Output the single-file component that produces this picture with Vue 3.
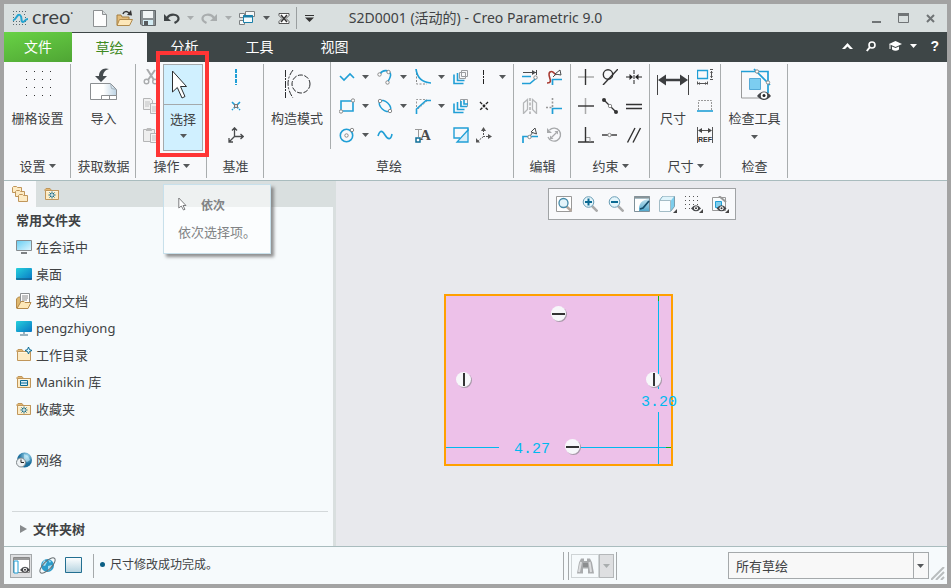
<script setup>
import { h, ref } from 'vue'

const B = '#209fd6'
const K = '#4a4c4e'
const folder = '<path d="M1 5V3.500l1-1h4l1.500 2H15" fill="#e3b873" stroke="#c0965a"/><path d="M1.500 4.500h13v9h-13z" fill="#fdebc4" stroke="#c0965a"/><path d="M2.500 5.500h11" stroke="#fff7e2"/>'
const node = (x, y) => `<circle cx="${x}" cy="${y}" r="1.700" fill="#fff" stroke="#8a8a8a"/>`
const eye = (x, y) => `<g transform="translate(${x} ${y})"><path d="M0 3.500Q5 -3 10 3.500Q5 9 0 3.500z" fill="#45474a"/><circle cx="5" cy="3.300" r="2" fill="#fff"/><circle cx="5" cy="3.300" r="1" fill="#333"/></g>`

const icons = {
  wave: [16, 14, `<g stroke="#59696f" stroke-dasharray="1 2"><path d="M1 .5h15M1 3.500h3M12 3.500h3M1 6.500h3M13 6.500h3M1 10.500h15M1 13.500h15"/></g><path d="M1 9c3 1 4-7 7-5s0 7 3 7c2 0 2-3 5-3" fill="none" stroke="#25a3cf" stroke-width="2"/>`],
  file: [14, 17, '<path d="M.5 .5h9l4 4v12h-13z" fill="#fdfdfd" stroke="#8d9092"/><path d="M9.500 .5v4h4" fill="#d8dcde" stroke="#8d9092"/>'],
  open: [17, 17, '<path d="M1 15V5h4l1 2h7v8z" fill="#e3bc7a" stroke="#a37d3f"/><path d="M3.500 9.500h13l-3 6H1z" fill="#fde7b9" stroke="#b08a4c"/><path d="M7 4c1-3 4-3 6-1" fill="none" stroke="#333" stroke-width="1.500"/><path d="M11 5l5 .5L15 0z" fill="#333"/>'],
  save: [16, 16, '<path d="M.5 .5h15v15H2l-1.500-1.500z" fill="#8a9093" stroke="#62676a"/><path d="M3 1h10v7H3z" fill="#f2f5f6"/><path d="M3 10h10v5H3z" fill="#d3ecf4"/><path d="M4 11h4v4H4z" fill="#55595c"/>'],
  undo: [16, 12, '<path d="M0 2v7h7z" fill="#3f4446"/><path d="M3 6c3-5 12-4 11.500 1 0 2-2 3-4 4" fill="none" stroke="#3f4446" stroke-width="2.200"/>'],
  redo: [16, 12, '<path d="M16 2v7H9z" fill="#a9adae"/><path d="M13 6C10 1 1 2 1.500 7c0 2 2 3 4 4" fill="none" stroke="#a9adae" stroke-width="2.200"/>'],
  wins: [16, 14, '<g fill="#f6f7f7" stroke="#7c8082"><path d="M6.500 .5h9v5h-9zM.5 2.500h5v4h-5zM.5 9.500h5v4h-5z"/></g><path d="M4.500 4.500h9v7h-9z" fill="#f4fbfd" stroke="#1a7fa8"/><path d="M4 5.500h10" stroke="#1a7fa8" stroke-width="2"/>'],
  closewin: [12, 11, '<path d="M1 .5h10v2l-3 3 3 3v2H1v-2l3-3-3-3z" fill="#fff" stroke="#555"/><path d="M3 2l6 7M9 2L3 9" stroke="#333" stroke-width="1.500"/>'],
  custom: [9, 7, '<path d="M0 .5h9" stroke="#333"/><path d="M0 2.500h9L4.500 7z" fill="#333"/>'],
  down: [7, 4, '<path d="M0 0h7L3.500 4z" fill="#55585a"/>'],
  downgray: [7, 4, '<path d="M0 0h7L3.500 4z" fill="#a9adae"/>'],
  downwhite: [7, 4, '<path d="M0 0h7L3.500 4z" fill="#fff"/>'],
  min: [9, 10, '<path d="M0 9h9" stroke="#707476" stroke-width="2"/>'],
  max: [11, 10, '<path d="M.5 .5h10v9H.5z" fill="none" stroke="#707476"/><path d="M0 1.500h11" stroke="#707476" stroke-width="3"/>'],
  close: [9, 9, '<path d="M1 1l7 7M8 1L1 8" stroke="#707476" stroke-width="2"/>'],
  caret: [11, 6, '<path d="M0 6l5.500-6L11 6H8L5.500 3.500 3 6z" fill="#fff"/>'],
  search: [10, 11, '<circle cx="6" cy="4" r="3" fill="none" stroke="#fff" stroke-width="1.600"/><path d="M4 6L.8 10" stroke="#fff" stroke-width="2"/>'],
  cap: [13, 10, '<path d="M0 3l6.500-3L13 3 6.500 6z" fill="#fff"/><path d="M3 5.500v3q3.500 2.500 7 0v-3L6.500 7z" fill="#fff"/><path d="M1 3v5" stroke="#fff"/>'],
  dots: [28, 28, '<path d="M2 1.500h25M2 9.500h25M2 17.500h25M2 25.500h25" stroke="#333" stroke-dasharray="1 7"/>'],
  import: [30, 33, '<defs><linearGradient id="gi"><stop offset=".5" stop-color="#fff"/><stop offset="1" stop-color="#bcd3e4"/></linearGradient></defs><path d="M1.500 15.500h20l6 6v10h-26z" fill="url(#gi)" stroke="#8b8e91"/><path d="M21.500 15.500l1 5 5 1" fill="none" stroke="#a7b4bd"/><path d="M12.500 31.500v-4h15v4zM20.500 31v-3.500" fill="#fff" stroke="#8b8e91"/><path d="M20 1C14-1 10 3 10 8H6l6 6 6-6h-4c0-3 2-6 6-7z" fill="#454b4f"/>'],
  cut: [16, 16, '<path d="M4 0l7 11M12 1L5 11" stroke="#a9abad" stroke-width="2"/><circle cx="3.500" cy="12.500" r="2.300" fill="none" stroke="#a9abad" stroke-width="1.400"/><circle cx="12" cy="12.500" r="2.300" fill="none" stroke="#a9abad" stroke-width="1.400"/>'],
  copy: [16, 16, '<g fill="#f1f1f1" stroke="#b4b5b6"><path d="M.5 .5h7l2 2v9h-9z"/><path d="M7.500 5.500h6l2 2v8h-8z"/></g><path d="M2 4h5M2 6h5M2 8h4M9 9h5M9 11h5M9 13h5" stroke="#c1c2c3"/>'],
  paste: [16, 16, '<path d="M.5 2.500h11v12H.5z" fill="#eee" stroke="#b4b5b6"/><path d="M3 3l1-2h4l1 2v1H3z" fill="#bbb"/><path d="M7.500 6.500h8v9h-8z" fill="#f5f5f5" stroke="#b4b5b6"/><path d="M9 9h5M9 11h5M9 13h5" stroke="#c1c2c3"/>'],
  arrow: [16, 30, '<path d="M1.500 1v21l4.800-4.500L11 28l3-1.500-4.500-10h6z" fill="#fff" stroke="#2c2e30"/>'],
  arrowsm: [9, 14, '<path d="M.8 1v10l2.500-2L5.500 13l1.500-.7L5 8.500h3z" fill="#fff" stroke="#707274" stroke-width=".9"/>'],
  cline: [16, 16, `<path d="M8 0v16" stroke="${B}" stroke-width="2" stroke-dasharray="4 1"/>`],
  cpoint: [16, 16, `<path d="M4 4l8 8M12 4l-8 8" stroke="${B}" stroke-width="1.600" stroke-dasharray="4 1"/><rect x="6.500" y="6.500" width="3" height="3" fill="#ddd" stroke="#777"/>`],
  csys: [16, 16, `<g fill="none" stroke="${K}" stroke-width="1.300"><path d="M6.500 1v8.500H15M6.500 9.500L1 15M4 3.500L6.500 .8 9 3.500M12.500 7l2.700 2.500-2.700 2.500M1 11v4h4"/></g>`],
  construct: [28, 30, '<g fill="none" stroke="#2b2d2f"><path d="M2.500 1v28" stroke-dasharray="7 1 2 1"/><path d="M10 1Q0 14 10 29" stroke-dasharray="6 1.500 2 1.500"/><circle cx="18" cy="15" r="9" stroke-dasharray="5 1.500"/></g>'],
  line: [16, 16, `<path d="M1 7l4 4 6-6 4 4" fill="none" stroke="${B}" stroke-width="1.600"/>`],
  arc: [16, 16, `<path d="M3 5C6 0 12 1 13.500 5c.6 3-1 5-3 8" fill="none" stroke="${B}" stroke-width="1.600"/>${node(2.5, 5.5)}${node(10.5, 13.5)}${node(11.5, 3)}`],
  fillet: [16, 16, `<path d="M1.500 4v11H12" fill="none" stroke="#888" stroke-dasharray="2 1.500"/><path d="M1 0c1 8 5 13.500 15 14" fill="none" stroke="${B}" stroke-width="1.700"/>`],
  offset: [16, 16, `<g fill="none" stroke="#9b9da0"><path d="M6.500 3.500h6v6h-6zM8.500 1.500h6v6h-6z"/></g><path d="M1 5.500v9h9.500M4.500 4v7.500h7" fill="none" stroke="${B}" stroke-width="1.600"/>`],
  thicken: [16, 16, `<path d="M7.500 1.500h7v7h-7z" fill="none" stroke="#9b9da0"/><path d="M1 5.500v9h9.500M4.500 4v7.500h7M11 2v4h4M8 3v5.500h6" fill="none" stroke="${B}" stroke-width="1.600"/>`],
  center: [16, 16, '<path d="M7.500 1v14" stroke="#222" stroke-dasharray="5 1 2 1"/>'],
  rect: [16, 16, `<path d="M2 3h12v10H2z" fill="none" stroke="${B}" stroke-width="1.600"/>${node(14, 2.5)}${node(2, 13.5)}`],
  ellipse: [16, 16, `<ellipse cx="8" cy="8" rx="7" ry="4" transform="rotate(43 8 8)" fill="none" stroke="${B}" stroke-width="1.500"/>${node(3, 3)}${node(13, 13)}`],
  chamfer: [16, 16, `<path d="M1.500 9V1.500H12M3 11L13 2" fill="none" stroke="#999" stroke-dasharray="2 1.500"/><path d="M1.500 16v-5L11 2.500h5" fill="none" stroke="${B}" stroke-width="1.600"/>`],
  point: [16, 16, '<path d="M4 4l8 8M12 4l-8 8" stroke="#222" stroke-width="1.400" stroke-dasharray="3 1"/><path d="M7 7h2v2H7z" fill="#222"/>'],
  circle: [16, 16, `<circle cx="7.500" cy="8.500" r="6.200" fill="none" stroke="${B}" stroke-width="1.600"/>${node(7.5, 8.5)}${node(13, 3)}`],
  spline: [16, 16, `<path d="M1 9C3 3 5 3 8 8s6 5 7-1" fill="none" stroke="${B}" stroke-width="1.600"/>`],
  text: [18, 16, `<path d="M1 2.500h7M4.500 2.500V10" fill="none" stroke="#999"/><rect x="2" y="11" width="4" height="4" fill="#fff" stroke="#0f6f99" stroke-width="1.500"/><text x="6" y="13" font-family="Liberation Serif" font-weight="bold" font-size="15" fill="${K}">A</text>`],
  palette: [16, 16, `<path d="M7 11H1V1h14v3" fill="none" stroke="${B}" stroke-width="1.400"/><path d="M15 3v12H4z" fill="#d7eef8" stroke="${B}" stroke-width="1.300"/>`],
  sketchcs: [16, 16, '<path d="M7.500 3v6.500H13M7.500 9.500L2 14" fill="none" stroke="#555" stroke-dasharray="2 1"/><path d="M5 4l2.500-4L10 4zM12 7l4 2.500-4 2.500zM0 15.500V11l4 4.500z" fill="#555"/>'],
  modify: [16, 16, `<path d="M1 3.500h13M14.500 1v5" stroke="${K}"/><path d="M0 7.500h9M0 14.500h8l7-6" fill="none" stroke="${B}" stroke-width="1.600"/><path d="M10 1l4 2.500L10 6z" fill="${K}"/>${node(13.5, 8.5)}`],
  delseg: [16, 16, `<path d="M1 14c8 0-1-8 3-11s5 6 7 1" fill="none" stroke="#a83b32" stroke-width="1.600"/><path d="M9 5l5-4 1 5zM7 8l3-3" fill="#fff" stroke="${K}"/><path d="M6.500 16v-5.500H16" fill="none" stroke="${B}" stroke-width="1.700"/>`],
  mirror: [16, 16, '<path d="M1.500 5L5.500 1.500v10l-4 4zM14.500 5l-4-3.500v10l4 4z" fill="none" stroke="#b5b7b9" stroke-width="1.300"/><path d="M8 0v16" stroke="#888" stroke-dasharray="3 1.500"/>'],
  corner: [16, 16, `<path d="M0 9.500h6M6.500 0v9" stroke="#999" stroke-dasharray="2 1.500" stroke-width="1.600"/><path d="M6.500 16v-5.500H16" fill="none" stroke="${B}" stroke-width="1.700"/>`],
  divide: [16, 16, `<path d="M1 16V9.500h15" fill="none" stroke="${B}" stroke-width="1.700"/><path d="M9 5l4-4 1.500 6zM8 9l3-4" fill="#fff" stroke="${K}"/>${node(7.5, 10)}`],
  rotate: [16, 16, '<path d="M3.500 3A6.500 6.500 0 1 1 2 10" fill="none" stroke="#a7a9ab" stroke-width="1.300"/><path d="M5.500 10.500l5-5" stroke="#a7a9ab" stroke-width="1.200"/><path d="M4 8.500V12h3.500zM8.500 4H12v3.500zM1 1v5h5z" fill="#a7a9ab"/>'],
  vert: [16, 16, '<path d="M0 8h16" stroke="#aaa" stroke-width="1.500"/><path d="M7.500 0v16" stroke="#333" stroke-width="1.400"/>'],
  horiz: [16, 16, '<path d="M7.500 0v16" stroke="#aaa" stroke-width="1.500"/><path d="M0 8h16" stroke="#333" stroke-width="1.400"/>'],
  perp: [16, 16, '<path d="M7.500 0v15M0 15h16" stroke="#333" stroke-width="1.400"/><path d="M8 10.500h4V15" fill="none" stroke="#999"/>'],
  tangent: [16, 16, '<circle cx="6" cy="5.500" r="4.700" fill="none" stroke="#333" stroke-width="1.400"/><path d="M1 16L16 0" stroke="#333" stroke-width="1.400"/>'],
  mid: [16, 16, `<path d="M2 2l12 12" stroke="#333" stroke-width="1.300"/><circle cx="2" cy="2" r="2" fill="#333"/><circle cx="14" cy="14" r="2" fill="#333"/>${node(8, 8)}`],
  coin: [16, 16, `<path d="M0 8h15" stroke="#333" stroke-width="1.400"/>${node(7.5, 8)}`],
  sym: [16, 16, '<path d="M8 1v14" stroke="#222" stroke-dasharray="4 1"/><path d="M0 8h6M10 8h6" stroke="#222"/><path d="M3.500 5L7 8l-3.500 3zM12.500 5L9 8l3.500 3z" fill="#222"/>'],
  equal: [16, 16, '<path d="M0 6.500h16M0 10.500h16" stroke="#333" stroke-width="1.400"/>'],
  para: [16, 16, '<path d="M1.500 15.500L9 1M7 15.500L14.500 1" stroke="#333" stroke-width="1.400"/>'],
  dim: [32, 22, '<path d="M.5 2v20M31.500 2v20" stroke="#444"/><path d="M6 7h20" stroke="#3c3e40" stroke-width="2.500"/><path d="M1 7l8-5.500v11zM31 7l-8-5.500v11z" fill="#3c3e40"/>'],
  perim: [16, 16, `<path d="M.5 1.500h10v8H.5z" fill="none" stroke="${B}" stroke-width="1.300"/><path d="M14.500 2v7M13 .5h3M13 10.500h3M1 14.500h9M.5 12.500v3M10.500 12.500v3" stroke="#555"/><path d="M13 4l1.500-2L16 4zM13 7l1.500 2L16 7zM3 13l-2 1.500L3 16zM8 13l2 1.500L8 16z" fill="#555"/>`],
  baseline: [16, 16, `<path d="M1.500 12V2.500h13V12" fill="none" stroke="#999" stroke-dasharray="2 1"/><path d="M0 13h16" stroke="${B}" stroke-width="1.600"/>`],
  ref: [16, 16, '<path d="M.5 0v16M15.500 0v16M2 3.500h12" stroke="#555"/><path d="M5 1L1 3.500 5 6zM11 1l4 2.500L11 6z" fill="#444"/><text x="8" y="15" text-anchor="middle" font-family="Liberation Sans" font-weight="bold" font-size="7" fill="#333">REF</text>'],
  inspect: [32, 34, `<path d="M2.500 4v27H22" fill="none" stroke="#999"/><path d="M2 4.500h27V26M15 2L31 18" fill="none" stroke="${B}" stroke-width="1.700"/><path d="M10.500 11.500h11v11h-11z" fill="#7ccdf1" stroke="#54a9d6"/>${node(18, 4.5)}${node(29, 15.5)}<path d="M18 29Q25 20 32 29Q25 37 18 29z" fill="#45474a"/><circle cx="25" cy="28.500" r="3.200" fill="#fff"/><circle cx="25" cy="28.500" r="1.500" fill="#222"/>`],
  folders: [16, 16, '<g fill="#fdebc4" stroke="#c0965a"><path d="M.5 1.500l1-1h3l1 1h4v5h-9z"/><path d="M3.500 5.500l1-1h3l1 1h4v5h-9z"/><path d="M6.500 9.500l1-1h3l1 1h4v6h-9z"/></g>'],
  favor: [16, 16, `${folder}<path d="M8 5.500v7M4.500 9h7M5.500 6.500l5 5M10.500 6.500l-5 5" stroke="#0b6a93"/><circle cx="8" cy="9" r="1" fill="#fff"/>`],
  session: [16, 16, '<defs><linearGradient id="gs" x2="1" y2="1"><stop offset="0" stop-color="#64cdf2"/><stop offset="1" stop-color="#dff6ff"/></linearGradient></defs><path d="M.5 1.500h15v10H.5z" fill="url(#gs)" stroke="#868b8e"/><path d="M5 13h6v2H5z" fill="#7d8184"/>'],
  desktop: [16, 16, '<defs><linearGradient id="gd" x2="1" y2="1"><stop offset="0" stop-color="#25d0dc"/><stop offset="1" stop-color="#0876c4"/></linearGradient></defs><rect y="2" width="16" height="12" rx="1" fill="url(#gd)"/><path d="M0 13h16" stroke="#134e78"/>'],
  docs: [16, 16, '<path d="M.5 15V6l2-2h3v11z" fill="#deb86f" stroke="#b58a4b"/><path d="M4.500 .5h9v12h-9z" fill="#fff" stroke="#8d9092"/><path d="M6 3h6M6 5h6M6 7h5" stroke="#888"/><path d="M1 15.500l4-7h3l1 1h6l-3 6z" fill="#fde7b7" stroke="#b58a4b"/>'],
  computer: [16, 16, '<rect y="1" width="16" height="11" rx="1" fill="url(#gd)"/><path d="M8 12v2M4 15h8" stroke="#7b9bab" stroke-width="1.500"/>'],
  workdir: [16, 16, `${folder}<path d="M12.500 0l1 2.500L16 3.500l-2.500 1-1 2.500-1-2.500-2.500-1 2.500-1z" fill="#d5f2ff" stroke="#0b6a93"/>`],
  manikin: [16, 16, `${folder}<path d="M4.500 6.500h7v5h-7zM4.500 9h7" fill="#d7eef8" stroke="#0b6a93"/>`],
  network: [16, 16, '<defs><radialGradient id="gn" cx=".65" cy=".25"><stop offset="0" stop-color="#a9e0f5"/><stop offset="1" stop-color="#1c6f9d"/></radialGradient></defs><circle cx="8.500" cy="8" r="7.500" fill="url(#gn)"/><path d="M8 2l4 2 2 4-3 2-3-2z" fill="#d4f2fb" opacity=".55"/><circle cx="5" cy="10.500" r="4.500" fill="#eef2f4" stroke="#7f878b"/><path d="M5 7.500v3h3" fill="none" stroke="#222"/>'],
  refit: [16, 16, '<path d="M.5 .5h15v15H.5z" fill="#fff" stroke="#999"/><path d="M10 10l5.500 5" stroke="#b5a79d" stroke-width="2.500"/><circle cx="7.500" cy="7" r="4.500" fill="#e4f4fa" stroke="#4489a8" stroke-width="1.300"/>'],
  zin: [16, 16, '<path d="M10 10l5.500 5.500" stroke="#aaa" stroke-width="2.500"/><circle cx="6.500" cy="6" r="5.300" fill="#e4f5fb" stroke="#6a9db5"/><path d="M3 6h7M6.500 2.500v7" stroke="#0b6a93" stroke-width="2"/>'],
  zout: [16, 16, '<path d="M10 10l5.500 5.500" stroke="#aaa" stroke-width="2.500"/><circle cx="6.500" cy="6" r="5.300" fill="#e4f5fb" stroke="#6a9db5"/><path d="M3 6h7" stroke="#0b6a93" stroke-width="2"/>'],
  repaint: [16, 16, '<defs><linearGradient id="gr" x2="0" y2="1"><stop offset="0" stop-color="#d9f0f8"/><stop offset="1" stop-color="#4fa6cb"/></linearGradient></defs><path d="M.5 .5h15v15H.5z" fill="url(#gr)" stroke="#7f9099"/><path d="M1 3h14Q4 4 5 15H1z" fill="#fff"/><path d="M0 1.500h16" stroke="#8b9498" stroke-width="2"/><path d="M6 13l3-1 6-7" fill="none" stroke="#154d6b" stroke-width="1.800"/>'],
  cube: [18, 17, '<path d="M.5 4.500l3-4h12v10l-4 5" fill="#7ccdec" stroke="#7b9cab"/><path d="M1 4.500l3-4h11l-3 4z" fill="#dff4fb"/><path d="M.5 4.500h11v11H.5z" fill="#f8fdff" stroke="#a3bcc6"/><path d="M18 13v4h-4z" fill="#444"/>'],
  grideye: [18, 17, `<path d="M0 .5h14M0 4.500h14M0 8.500h14M0 12.500h7" stroke="#555" stroke-dasharray="1 3"/>${eye(6, 9)}<path d="M18 13v4h-4z" fill="#444"/>`],
  showeye: [18, 17, `<path d="M1.500 1.500h13v13h-13z" fill="#f8fcfd" stroke="#999"/><path d="M4.500 5.500h6v6h-6z" fill="#80cdeb" stroke="${B}"/><path d="M8 0l7 6" stroke="#999" stroke-width="2"/>${eye(5.5, 9)}<path d="M18 13v4h-4z" fill="#444"/>`],
  treeeye: [17, 17, `<path d="M.5 .5h16v15H.5z" fill="#fff" stroke="#888"/><path d="M1 2h15" stroke="#999" stroke-width="2"/><path d="M1 4h4v12H1z" fill="#fff" stroke="${B}"/>${eye(7, 9.5)}`],
  globe: [17, 17, '<circle cx="8.500" cy="8.500" r="6.500" fill="#2b9ccb"/><path d="M5 3l3 2-2 4-3-1zM9 9l4-1-1 4-3 2zM9 3l3 1-1 2z" fill="#a4def2"/><ellipse cx="8.500" cy="8.500" rx="10" ry="4" transform="rotate(-45 8.500 8.500)" fill="none" stroke="#697074"/>'],
  square: [17, 17, '<defs><linearGradient id="gq" x2="0" y2="1"><stop offset="0" stop-color="#fff"/><stop offset="1" stop-color="#b5d3e0"/></linearGradient></defs><path d="M.5 .5h16v15H.5z" fill="url(#gq)" stroke="#236f91"/>'],
  bino: [17, 16, '<path d="M4 .5h3V3h3V.5h3l2 4 2 11h-6v-5H6v5H0l2-11z" fill="#a9abad"/><path d="M4 4L2 14M12.500 4L14 14" stroke="#dcdddf" stroke-width="2"/><path d="M6 5h5v4H6z" fill="#8c8e90"/>'],
  grip: [14, 13, '<path d="M0 13L13 0M5 13l8-8M10 13l3-3" stroke="#b9bdbe" stroke-width="2"/>'],
  tri: [7, 8, '<path d="M0 0l7 4-7 4z" fill="#888b8d"/>'],
}

const Ic = ({ n }) => {
  const [w, ht, body] = icons[n]
  return h('svg', { class: 'ic', width: w, height: ht, viewBox: `0 0 ${w} ${ht}`, 'aria-hidden': 'true', innerHTML: body })
}
Ic.props = ['n']

const quick = ['file', 'open', 'save', 'undo', 'downgray', 'redo', 'downgray', 'wins', 'down', 'closewin']
const menus = ['草绘', '分析', '工具', '视图']
const sketchTools = [
  'line', 'down', 'arc', 'down', 'fillet', 'down', 'offset', 'center', 'down',
  'rect', 'down', 'ellipse', 'down', 'chamfer', 'down', 'thicken', 'point', '',
  'circle', 'down', 'spline', '', 'text', '', 'palette', 'sketchcs', '',
]
const editTools = ['modify', 'delseg', 'mirror', 'corner', 'divide', 'rotate']
const constraintTools = ['vert', 'tangent', 'sym', 'horiz', 'mid', 'equal', 'perp', 'coin', 'para']
const places = [
  ['session', '在会话中'], ['desktop', '桌面'], ['docs', '我的文档'], ['computer', 'pengzhiyong'],
  ['workdir', '工作目录'], ['manikin', 'Manikin 库'], ['favor', '收藏夹'], ['network', '网络'],
]
const viewTools = ['refit', 'zin', 'zout', 'repaint', 'cube', 'grideye', 'showeye']
const marks = [[118, 23, 'h'], [23, 89, 'v'], [213, 89, 'v'], [132, 156, 'h']]
const filter = ref('所有草绘')
</script>

<template>
  <div class="window">
    <header class="titlebar">
      <div class="quick">
        <span class="brand"><Ic n="wave" /><b>creo</b><i>•</i></span>
        <button v-for="(q, i) in quick" :key="i" :class="['q', 'q-' + q]" :aria-label="q"><Ic :n="q" /></button>
        <span class="bar"></span>
        <button class="q" aria-label="custom"><Ic n="custom" /></button>
      </div>
      <h1>S2D0001 (活动的) - Creo Parametric 9.0</h1>
      <div class="controls">
        <button v-for="c in ['min', 'max', 'close']" :key="c" :aria-label="c"><Ic :n="c" /></button>
      </div>
    </header>

    <nav class="menubar">
      <button class="filetab">文件</button>
      <button v-for="(m, i) in menus" :key="m" :class="['tab', { active: i === 0 }]">{{ m }}</button>
      <div class="help">
        <button aria-label="caret"><Ic n="caret" /></button>
        <button aria-label="search"><Ic n="search" /></button>
        <button class="learn" aria-label="cap"><Ic n="cap" /><Ic n="downwhite" /></button>
        <button aria-label="help"><b>?</b></button>
      </div>
    </nav>

    <section class="ribbon">
      <div class="group g67">
        <button class="big"><span><Ic n="dots" /></span>栅格设置</button>
        <button class="foot">设置<Ic n="down" /></button>
      </div>
      <div class="group g65">
        <button class="big"><span><Ic n="import" /></span>导入</button>
        <div class="foot">获取数据</div>
      </div>
      <div class="group g71">
        <div class="tools clip">
          <button v-for="t in ['cut', 'copy', 'paste']" :key="t" :aria-label="t"><Ic :n="t" /></button>
        </div>
        <button class="select"><span><Ic n="arrow" /></span>选择<Ic n="down" /></button>
        <div class="highlight"></div>
        <button class="foot">操作<Ic n="down" /></button>
        <div class="tip" role="tooltip">
          <strong><Ic n="arrowsm" />依次</strong>
          <p>依次选择项。</p>
        </div>
      </div>
      <div class="group g57">
        <div class="tools one">
          <button v-for="t in ['cline', 'cpoint', 'csys']" :key="t" :aria-label="t"><Ic :n="t" /></button>
        </div>
        <div class="foot">基准</div>
      </div>
      <div class="group">
        <div class="row">
          <button class="big mode"><span><Ic n="construct" /></span>构造模式</button>
          <div class="tools sketch">
            <template v-for="(t, i) in sketchTools" :key="i">
              <button v-if="t" :aria-label="t"><Ic :n="t" /></button>
              <span v-else></span>
            </template>
          </div>
        </div>
        <div class="foot">草绘</div>
      </div>
      <div class="group g57">
        <div class="tools two">
          <button v-for="t in editTools" :key="t" :aria-label="t"><Ic :n="t" /></button>
        </div>
        <div class="foot">编辑</div>
      </div>
      <div class="group g79">
        <div class="tools three">
          <button v-for="t in constraintTools" :key="t" :aria-label="t"><Ic :n="t" /></button>
        </div>
        <button class="foot">约束<Ic n="down" /></button>
      </div>
      <div class="group g71">
        <div class="row dims">
          <button class="big"><span><Ic n="dim" /></span>尺寸</button>
          <div class="tools one">
            <button v-for="t in ['perim', 'baseline', 'ref']" :key="t" :aria-label="t"><Ic :n="t" /></button>
          </div>
        </div>
        <button class="foot">尺寸<Ic n="down" /></button>
      </div>
      <div class="group g67">
        <button class="big"><span><Ic n="inspect" /></span>检查工具<Ic n="down" /></button>
        <div class="foot">检查</div>
      </div>
    </section>

    <main class="work">
      <aside class="side">
        <div class="sidetabs">
          <button class="on" aria-label="folders"><Ic n="folders" /></button>
          <button aria-label="favorites"><Ic n="favor" /></button>
        </div>
        <h2>常用文件夹</h2>
        <ul>
          <li v-for="[ic, label] in places" :key="label" :class="{ apart: ic === 'network' }">
            <a href="#"><Ic :n="ic" />{{ label }}</a>
          </li>
        </ul>
        <button class="tree"><Ic n="tri" />文件夹树</button>
      </aside>

      <section class="canvas">
        <div class="viewbar">
          <button v-for="v in viewTools" :key="v" :aria-label="v"><Ic :n="v" /></button>
        </div>
        <svg class="drawing" width="240" height="180" viewBox="0 0 240 180">
          <rect x="5" y="5" width="227" height="170" fill="#edc1e9" />
          <g stroke="#00b9ee" fill="none">
            <path d="M6 157.500h53M133 157.500h99" />
            <path d="M218.500 5v94M218.500 122v53" />
          </g>
          <path d="M218.500 6v5M226 157.500h6" stroke="#12b515" />
          <rect x="5" y="5" width="227" height="170" fill="none" stroke="#ffa000" stroke-width="2" />
          <g class="num">
            <text x="74" y="163">4.27</text>
            <text x="201" y="116">3.20</text>
          </g>
          <g v-for="([x, y, d], i) in marks" :key="i">
            <circle :cx="x + 1.5" :cy="y + 1.5" r="7.500" fill="#a99aaa" />
            <circle :cx="x + 0.5" :cy="y + 0.5" r="7.500" fill="#f7f7fa" />
            <path :d="d === 'h' ? `M${x - 6} ${y + 1}h13` : `M${x + 1} ${y - 6}v13`" stroke="#333" stroke-width="2" />
          </g>
        </svg>
      </section>
    </main>

    <footer class="status">
      <button class="pressed" aria-label="tree"><Ic n="treeeye" /></button>
      <button aria-label="browser"><Ic n="globe" /></button>
      <button aria-label="full"><Ic n="square" /></button>
      <p><span class="dot"></span>尺寸修改成功完成。</p>
      <div class="right">
        <div class="find">
          <button aria-label="find"><Ic n="bino" /></button>
          <button class="more" aria-label="more"><Ic n="downgray" /></button>
        </div>
        <div class="combo">
          <select v-model="filter" aria-label="filter"><option>所有草绘</option></select>
          <span><Ic n="down" /></span>
        </div>
        <Ic n="grip" class="grip" />
      </div>
    </footer>
  </div>
</template>

<style>
body {
  margin: 0;
  background: #a3a3a3;
}
</style>

<style scoped>
* {
  box-sizing: border-box;
}
.window {
  display: flex;
  flex-direction: column;
  min-height: 100vh;
  border: 4px solid #a3a3a3;
  background: #f8f9fb;
  color: #404244;
  font: 13px/18px "Noto Sans", "Noto Sans CJK SC", sans-serif;
}
button {
  display: flex;
  align-items: center;
  justify-content: center;
  padding: 0;
  border: 0;
  background: none;
  color: inherit;
  font: inherit;
}
.ic {
  display: block;
  flex: none;
}

/* title bar */
.titlebar {
  display: grid;
  grid-template-columns: 1fr auto 1fr;
  align-items: center;
  height: 28px;
  background: #d9dfdf;
}
.quick {
  display: flex;
  align-items: center;
  padding-left: 8px;
}
.brand {
  display: flex;
  align-items: center;
  gap: 4px;
  width: 76px;
}
.brand b {
  padding-bottom: 4px;
  font: 20px/24px Lato, sans-serif;
}
.brand i {
  margin: -8px 0 0 -4px;
  font-size: 7px;
}
.q {
  width: 24px;
}
.q-downgray,
.q-down {
  width: 12px;
}
.q-redo,
.q-wins {
  width: 26px;
}
.bar {
  width: 1px;
  height: 22px;
  background: #9a9fa0;
}
h1 {
  margin: 0;
  font-size: 14px;
  font-weight: 400;
  white-space: nowrap;
}
.controls {
  display: flex;
  justify-content: flex-end;
  padding-right: 3px;
}
.controls button {
  width: 27px;
}

/* menu bar */
.menubar {
  display: flex;
  height: 30px;
  background: #3e4647;
  color: #fff;
  font-size: 14px;
}
.filetab {
  width: 68px;
  background: linear-gradient(165deg, #68d245, #4fa534);
}
.tab {
  width: 75px;
}
.tab.active {
  margin-top: 1px;
  background: #f8f9fb;
  color: #3f8a1f;
}
.help {
  display: flex;
  align-items: center;
  gap: 13px;
  margin-left: auto;
  padding: 0 8px 2px 0;
}
.help b {
  font-family: "Liberation Sans", sans-serif;
}
.learn {
  gap: 8px;
}

/* ribbon */
.ribbon {
  display: flex;
  height: 119px;
  border-bottom: 1px solid #a9bcbe;
}
.group {
  position: relative;
  display: flex;
  flex-direction: column;
  justify-content: space-between;
}
.group::after {
  content: "";
  position: absolute;
  top: 2px;
  right: 0;
  bottom: 2px;
  width: 1px;
  background: #a9adae;
}
.g57 {
  width: 57px;
}
.g65 {
  width: 65px;
}
.g67 {
  width: 67px;
}
.g71 {
  width: 71px;
}
.g79 {
  width: 79px;
}
.big {
  flex-direction: column;
  justify-content: flex-start;
  line-height: 24px;
  white-space: nowrap;
}
.big span {
  display: flex;
  align-items: center;
  height: 44px;
}
.big > .ic {
  margin-top: 5px;
}
.foot {
  display: flex;
  align-items: center;
  justify-content: center;
  gap: 3px;
  height: 28px;
}
.row {
  display: flex;
}
.tools {
  display: grid;
  grid-auto-rows: 29px;
}
.clip {
  grid-template-columns: 16px;
  padding-left: 7px;
}
.select {
  position: absolute;
  top: 2px;
  left: 27px;
  z-index: 1;
  flex-direction: column;
  justify-content: flex-start;
  width: 40px;
  height: 87px;
  border: 1px solid #a5a9ab;
  background: #d0f0ff;
  line-height: 29px;
}
.select span {
  display: flex;
  align-items: center;
  justify-content: center;
  width: 100%;
  height: 40px;
  padding-right: 8px;
  border-bottom: 1px solid #a5a9ab;
}
.highlight {
  position: absolute;
  top: -11px;
  left: 20px;
  z-index: 2;
  width: 53px;
  height: 106px;
  border: 4px solid #ff3535;
}
.tip {
  position: absolute;
  top: 122px;
  left: 27px;
  z-index: 3;
  width: 108px;
  padding: 12px 14px;
  border: 1px solid #c8e0eb;
  background: rgba(255, 255, 255, 0.55);
  box-shadow: 3px 3px 3px #777c;
  color: #818385;
  white-space: nowrap;
}
.tip strong {
  display: flex;
  gap: 14px;
  font-size: 12px;
}
.tip p {
  margin: 8px 0 0;
}
.one {
  grid-template-columns: 1fr;
}
.mode {
  width: 67px;
  border-right: 1px solid #a9adae;
}
.sketch {
  grid-template-columns: repeat(7, 19px) 28px 8px;
  padding: 0 8px 0 6px;
}
.two {
  grid-template-columns: 24px 24px;
  padding-left: 4px;
}
.three {
  grid-template-columns: repeat(3, 24px);
  padding-left: 3px;
}
.dims {
  gap: 8px;
  padding-left: 7px;
}

/* workspace */
.work {
  display: flex;
  flex: 1;
  border-bottom: 1px solid #a9bcbe;
}
.side {
  display: flex;
  flex-direction: column;
  width: 332px;
  border-right: 3px solid #d9dfdf;
  background: #f6fafc;
}
.sidetabs {
  display: flex;
  height: 26px;
  background: #d9dfdf;
}
.sidetabs button {
  width: 32px;
}
.sidetabs .on {
  background: #f8f9fb;
}
h2 {
  margin: 0;
  padding-left: 12px;
  font-size: 13px;
  line-height: 26px;
}
ul {
  margin: 0;
  padding: 0 0 0 12px;
  list-style: none;
}
li a {
  display: flex;
  align-items: center;
  gap: 4px;
  height: 27px;
  color: inherit;
  text-decoration: none;
}
.apart {
  margin-top: 24px;
}
.tree {
  justify-content: flex-start;
  gap: 6px;
  height: 35px;
  margin: auto 5px 0 8px;
  padding-left: 8px;
  border-top: 1px solid #d3d8da;
  font-weight: 700;
}
.canvas {
  position: relative;
  flex: 1;
  background: #e8e9ed;
}
.viewbar {
  display: flex;
  width: max-content;
  margin: 7px auto 0;
  padding: 0 2px;
  border: 1px solid #a0a3a5;
  background: #f8f9fb;
}
.viewbar button {
  width: 26px;
  height: 30px;
}
.drawing {
  position: absolute;
  top: 109px;
  left: 104px;
}
.num {
  fill: #00b9ee;
  font: 15px "Liberation Mono", monospace;
}

/* status bar */
.status {
  display: flex;
  align-items: center;
  gap: 5px;
  height: 37px;
  padding-left: 6px;
  background: #f6fafc;
}
.status > button {
  width: 21px;
  height: 24px;
}
.status > .pressed {
  width: 22px;
  border: 1px solid #a5a9ab;
  background: #dedfe1;
}
.status p {
  display: flex;
  align-items: center;
  gap: 5px;
  height: 24px;
  margin: 0 0 0 4px;
  padding: 0 0 2px 6px;
  border-left: 1px solid #a5a9ab;
  font-size: 12px;
}
.dot {
  width: 5px;
  height: 5px;
  border-radius: 50%;
  background: #0b5f85;
}
.right {
  display: flex;
  align-items: center;
  margin-left: auto;
}
.find {
  display: flex;
  height: 28px;
  margin-right: 111px;
  padding: 2px;
  border: 1px solid #a5a9ab;
  border-width: 0 1px;
  box-shadow: -4px 0 0 #f6fafc, -5px 0 0 #a5a9ab;
}
.find button {
  width: 28px;
  border: 1px solid #cfd4d6;
}
.find .more {
  width: 15px;
  border-color: #b4b7b9;
  background: #dedfe1;
}
.combo {
  position: relative;
  height: 27px;
}
.combo select {
  width: 201px;
  height: 27px;
  padding: 0 7px;
  border: 1px solid #a5a9ab;
  border-radius: 0;
  background: #f8f8f8;
  color: inherit;
  font: inherit;
  appearance: none;
}
.combo span {
  position: absolute;
  top: 1px;
  right: 1px;
  bottom: 1px;
  display: flex;
  align-items: center;
  width: 15px;
  padding-left: 3px;
  border-left: 1px solid #a5a9ab;
  pointer-events: none;
}
.grip {
  align-self: flex-end;
  margin: 0 2px;
}
</style>
